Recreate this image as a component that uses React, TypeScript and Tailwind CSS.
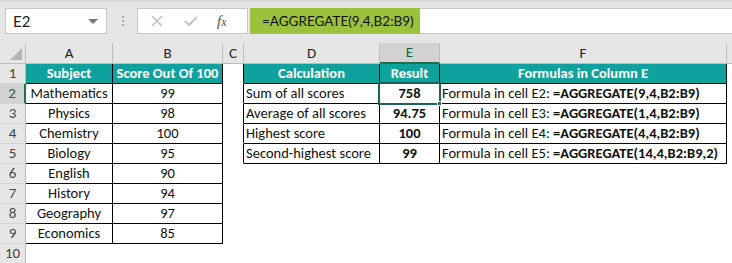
import type { ReactNode } from 'react';

const TEAL = 'bg-[#0fa19d]';

const subjects: [string, string][] = [
  ['Mathematics', '99'],
  ['Physics', '98'],
  ['Chemistry', '100'],
  ['Biology', '95'],
  ['English', '90'],
  ['History', '94'],
  ['Geography', '97'],
  ['Economics', '85'],
];

const calcs: [string, string, string][] = [
  ['Sum of all scores', '758', '=AGGREGATE(9,4,B2:B9)'],
  ['Average of all scores', '94.75', '=AGGREGATE(1,4,B2:B9)'],
  ['Highest score', '100', '=AGGREGATE(4,4,B2:B9)'],
  ['Second-highest score', '99', '=AGGREGATE(14,4,B2:B9,2)'],
];

/** 单元格：宽度 + 右/下边框颜色，边框画在格子自身的最后一像素 */
function Cell({
  w,
  children,
  className = '',
}: {
  w: string;
  children?: ReactNode;
  className?: string;
}) {
  return (
    <div className={`flex h-[20px] shrink-0 items-center overflow-hidden whitespace-nowrap border-r border-b ${w} ${className}`}>
      {children}
    </div>
  );
}

const colHeaders = [
  { l: 'A', w: 'w-[87px]' },
  { l: 'B', w: 'w-[110px]' },
  { l: 'C', w: 'w-[21px]' },
  { l: 'D', w: 'w-[136px]' },
  { l: 'E', w: 'w-[60px]' },
  { l: 'F', w: 'w-[287px]' },
];

export default function App() {
  return (
    <div className="relative h-[263px] w-[732px] overflow-hidden bg-white font-['Carlito','Lato',sans-serif] text-[14.5px] text-[#111]">
      {/* 名称框 + 编辑栏 */}
      <div className="flex h-[43px] items-start border-t-2 border-[#d8d8d8] bg-[#e6e6e6] pt-[6px] pl-[5px]">
        <div className="flex h-[26px] w-[102px] items-center justify-between border border-[#c6c6c6] bg-white pr-[8px] pl-[7px] font-['Lato',sans-serif] text-[15px] text-[#222]">
          <span>E2</span>
          <span className="mt-[1px] h-0 w-0 border-x-[5px] border-t-[5px] border-x-transparent border-t-[#777]" />
        </div>
        <div className="ml-[14px] flex h-[26px] w-[4px] flex-col items-center justify-center gap-[2px]">
          <span className="size-[2px] bg-[#aaa]" />
          <span className="size-[2px] bg-[#aaa]" />
          <span className="size-[2px] bg-[#aaa]" />
        </div>
        <div className="ml-[12px] flex h-[26px] w-[111px] items-center border border-[#c6c6c6] bg-white pl-[13px]">
          <svg width="12" height="12" viewBox="0 0 12 12" className="stroke-[#c0c0c0]">
            <path d="M1 1 L11 11 M11 1 L1 11" strokeWidth="1.6" fill="none" />
          </svg>
          <svg width="14" height="12" viewBox="0 0 14 12" className="ml-[21px] stroke-[#c0c0c0]">
            <path d="M1 6 L5 10 L13 2" strokeWidth="2" fill="none" />
          </svg>
          <span className="ml-[19px] font-['Liberation_Serif',serif] text-[15px] italic text-[#555]">
            f<span className="text-[12px]">x</span>
          </span>
        </div>
        <div className="ml-[2px] flex h-[26px] w-[170px] items-center overflow-hidden whitespace-nowrap bg-[#9bc23d] pl-[12px] font-['Lato',sans-serif] text-[13.5px] text-[#111]">
          =AGGREGATE(9,4,B2:B9)
        </div>
        <div className="h-[26px] flex-1 border-y border-[#c6c6c6] bg-white" />
      </div>

      {/* 列标题 */}
      <div className="flex h-[21px] bg-[#e6e6e6] text-[15px]">
        <div className="relative h-[21px] w-[26px] shrink-0 border-r border-b border-[#bdbdbd]">
          <span className="absolute right-[3px] bottom-[3px] h-0 w-0 border-b-[12px] border-l-[12px] border-b-[#b4b4b4] border-l-transparent" />
        </div>
        {colHeaders.map((c) =>
          c.l === 'E' ? (
            <div
              key={c.l}
              className={`flex h-[21px] shrink-0 items-center justify-center border-r border-b-2 border-r-[#bdbdbd] border-b-[#217346] bg-[#d2d2d2] text-[#1d5b48] ${c.w}`}
            >
              {c.l}
            </div>
          ) : (
            <div
              key={c.l}
              className={`flex h-[21px] shrink-0 items-center justify-center border-r border-b border-[#bdbdbd] text-[#222] ${c.w}`}
            >
              {c.l}
            </div>
          ),
        )}
        <div className="h-[21px] flex-1 border-b border-[#bdbdbd]" />
      </div>

      {/* 数据行 */}
      {Array.from({ length: 10 }, (_, i) => {
        const row = i + 1;
        const sub = row >= 2 && row <= 9 ? subjects[row - 2] : null;
        const calc = row >= 2 && row <= 5 ? calcs[row - 2] : null;
        const inA = row <= 9;
        const inD = row <= 5;
        const head = row === 1;
        return (
          <div key={row} className="flex">
            {row === 2 ? (
              <div className="flex h-[20px] w-[26px] shrink-0 items-center justify-center border-r-2 border-b border-r-[#217346] border-b-[#d4d4d4] bg-[#d2d2d2] text-[15px] text-[#1d5b48]">
                {row}
              </div>
            ) : (
              <div className="flex h-[20px] w-[26px] shrink-0 items-center justify-center border-r border-b border-r-[#bdbdbd] border-b-[#d4d4d4] bg-[#e6e6e6] text-[15px] text-[#444]">
                {row}
              </div>
            )}
            <Cell
              w="w-[87px]"
              className={`justify-center ${inA ? 'border-black' : 'border-transparent'} ${head ? `${TEAL} font-bold text-white` : ''}`}
            >
              {head ? 'Subject' : sub?.[0]}
            </Cell>
            <Cell
              w="w-[110px]"
              className={`justify-center ${inA ? 'border-black' : 'border-transparent'} ${head ? `${TEAL} font-bold text-white` : ''}`}
            >
              {head ? 'Score Out Of 100' : sub?.[1]}
            </Cell>
            <Cell w="w-[21px]" className={`border-b-transparent ${inD ? 'border-r-black' : 'border-r-transparent'}`} />
            <Cell
              w="w-[136px]"
              className={`${inD ? 'border-black' : 'border-transparent'} ${head ? `${TEAL} justify-center font-bold text-white` : 'pl-[2px]'}`}
            >
              {head ? 'Calculation' : calc?.[0]}
            </Cell>
            <Cell
              w="w-[60px]"
              className={`justify-center font-bold ${inD ? 'border-black' : 'border-transparent'} ${head ? `${TEAL} text-white` : ''}`}
            >
              {head ? 'Result' : calc?.[1]}
            </Cell>
            <Cell
              w="w-[287px]"
              className={`${inD ? 'border-black' : 'border-transparent'} ${head ? `${TEAL} justify-center font-bold text-white` : 'pl-[2px]'}`}
            >
              {head ? (
                'Formulas in Column E'
              ) : calc ? (
                <>
                  Formula in cell E{row}:&nbsp;<b>{calc[2]}</b>
                </>
              ) : null}
            </Cell>
            <div className="h-[20px] flex-1" />
          </div>
        );
      })}

      {/* E2 选中框 */}
      <div className="absolute top-[82px] left-[378px] h-[23px] w-[63px] border-2 border-[#1f5f5c]" />
      <div className="absolute top-[101px] left-[437px] size-[5px] border border-white bg-[#1f5f5c]" />
    </div>
  );
}
